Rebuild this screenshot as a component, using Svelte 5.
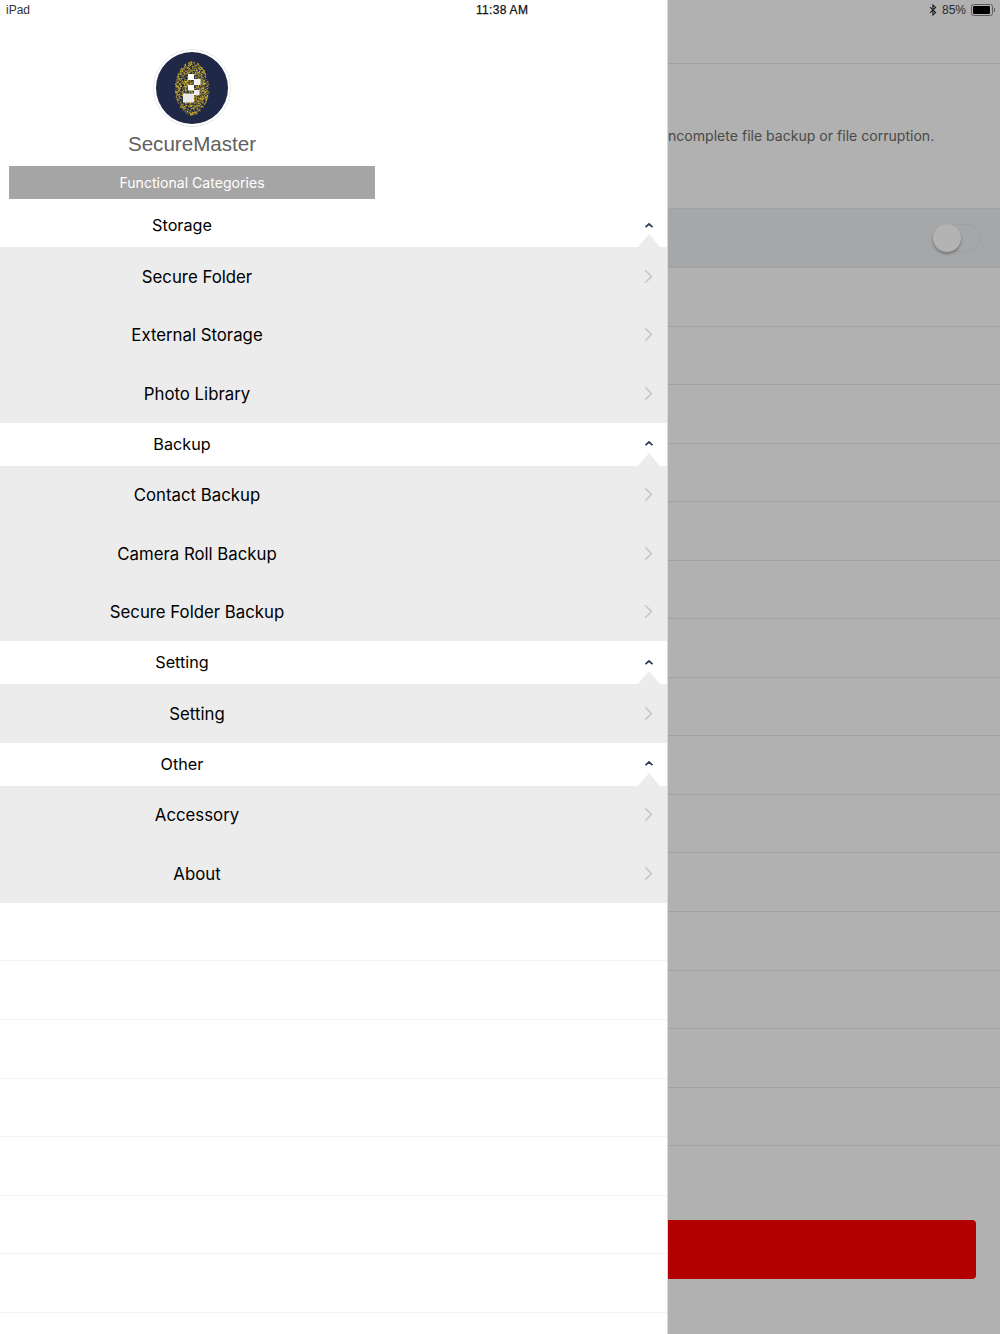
<script>
  const groups = [
    { title: 'Storage', items: ['Secure Folder', 'External Storage', 'Photo Library'] },
    { title: 'Backup', items: ['Contact Backup', 'Camera Roll Backup', 'Secure Folder Backup'] },
    { title: 'Setting', items: ['Setting'] },
    { title: 'Other', items: ['Accessory', 'About'] }
  ];

  const emptyRows = Array(7);
  const bgRows = Array(15);

  // speckle for the fingerprint in the logo
  let seed = 7;
  const rnd = () => {
    seed = (seed * 16807) % 2147483647;
    return seed / 2147483647;
  };
  const dots = [];
  while (dots.length < 1500) {
    const x = rnd() * 2 - 1;
    const y = rnd() * 2 - 1;
    if (x * x + y * y > 1) continue;
    dots.push({
      x: 39 + x * 17,
      y: 39.5 + y * 27 * (1 - 0.1 * x * x),
      r: 0.3 + rnd() * 0.35,
      o: 0.5 + rnd() * 0.5
    });
  }
</script>

<div class="page">
  <aside class="drawer">
    <header class="brand">
      <svg class="logo" width="78" height="78" viewBox="0 0 78 78">
        <circle cx="39" cy="39" r="38.5" fill="#fff" stroke="#e8e9ec" />
        <circle cx="39" cy="39" r="36" fill="#1f2947" />
        {#each dots as d}
          <circle cx={d.x} cy={d.y} r={d.r} fill="#e6c12c" opacity={d.o} />
        {/each}
        <rect x="35" y="25" width="6" height="6" fill="#fff" />
        <rect x="41" y="30" width="6.5" height="6" fill="#f4f4f4" />
        <rect x="35" y="36" width="6" height="5.5" fill="#fff" />
        <rect x="41" y="41" width="5.5" height="5" fill="#eee" />
        <rect x="30" y="44.5" width="11" height="9" fill="#e9e9e9" />
      </svg>
      <div class="app-name">SecureMaster</div>
    </header>
    <div class="banner">Functional Categories</div>

    {#each groups as g}
      <section>
        <div class="group-head">
          <span>{g.title}</span>
          <svg class="up" width="10" height="7" viewBox="0 0 10 7">
            <path d="M1.5 5.2 L5 2 L8.5 5.2" fill="none" stroke="#2f3d52" stroke-width="1.7" />
          </svg>
          <i class="notch"></i>
        </div>
        {#each g.items as item}
          <div class="item">
            <span>{item}</span>
            <svg class="next" width="9" height="15" viewBox="0 0 9 15">
              <path d="M1.3 1.2 L7.4 7.5 L1.3 13.8" fill="none" stroke="#c6c6cb" stroke-width="1.6" />
            </svg>
          </div>
        {/each}
      </section>
    {/each}

    {#each emptyRows as _}
      <div class="empty"></div>
    {/each}
  </aside>

  <main class="behind">
    <div class="nav"></div>
    <div class="note"><p>ncomplete file backup or file corruption.</p></div>
    <div class="switch-row">
      <div class="switch"><i></i></div>
    </div>
    {#each bgRows as _}
      <div class="bg-row"></div>
    {/each}
    <div class="red-btn"></div>
  </main>

  <div class="status">
    <span>iPad</span>
    <span class="time">11:38 AM</span>
    <span class="right">
      <svg width="8" height="12" viewBox="0 0 8 12">
        <path d="M1 3.2 L6.6 8.5 L3.9 11 V1 L6.6 3.5 L1 8.8" fill="none" stroke="#222" stroke-width="1.1" />
      </svg>
      85%
      <span class="battery"><b></b></span>
    </span>
  </div>
</div>

<style>
  :global(body) { margin: 0; }
  .page {
    position: relative; display: flex; width: 1000px; height: 1334px; overflow: hidden;
    font-family: "Inter", "Liberation Sans", sans-serif; color: #000;
  }

  .drawer { width: 668px; flex: none; background: #fff; box-sizing: border-box; border-right: 1px solid #d8d8d8; }
  .brand { height: 166px; width: 384px; display: flex; flex-direction: column; align-items: center; padding-top: 49px; box-sizing: border-box; }
  .logo { display: block; }
  .app-name { font: 20.6px/26px "Liberation Sans", sans-serif; color: #5f5f5f; margin-top: 4px; }
  .banner {
    width: 366px; height: 33px; margin-left: 9px; background: #a5a5a5; color: #fff;
    font-size: 14.1px; line-height: 34px; text-align: center;
  }

  .group-head { position: relative; height: 43px; display: flex; align-items: center; background: #fff; font-size: 16.2px; }
  section:first-of-type .group-head { height: 48.4px; padding-top: 5px; box-sizing: border-box; }
  .group-head span { width: 364px; text-align: center; margin-bottom: 1px; }
  .up { position: absolute; left: 644px; top: calc(50% - 4px); }
  section:first-of-type .up { top: calc(50% - 1px); }
  .notch {
    position: absolute; left: 638px; bottom: 0; width: 0; height: 0;
    border-left: 11px solid transparent; border-right: 11px solid transparent; border-bottom: 13px solid #ececec;
  }

  .item { position: relative; height: 58.5px; display: flex; align-items: center; background: #ececec; font-size: 16.8px; }
  .item span { width: 394px; text-align: center; }
  .next { position: absolute; left: 644px; top: 21.5px; }

  .empty { height: 58.6px; box-sizing: border-box; border-bottom: 1px solid #f3f3f3; }

  .behind { position: relative; flex: 1; background: #b1b1b1; overflow: hidden; font-size: 14.07px; color: #4a4a4a; }
  .nav { height: 64px; box-sizing: border-box; border-bottom: 1px solid #a0a0a0; }
  .note { height: 145px; box-sizing: border-box; border-bottom: 1px solid #a2a2a2; }
  .note p { margin: 0; padding-top: 63px; line-height: 18px; white-space: nowrap; }
  .switch-row { height: 59px; background: #a6a7a9; box-sizing: border-box; border-bottom: 1px solid #a0a0a0; display: flex; align-items: center; justify-content: flex-end; padding-right: 19px; }
  .switch { position: relative; width: 48px; height: 28px; border: 1px solid #a0a1a3; border-radius: 15px; box-sizing: border-box; }
  .switch i { position: absolute; left: -1px; top: -1px; width: 28px; height: 28px; border-radius: 50%; background: #b3b3b3; box-shadow: 0 2px 3px rgba(0, 0, 0, 0.3); }
  .bg-row { height: 58.55px; box-sizing: border-box; border-bottom: 1px solid #a2a2a2; }
  .red-btn {
    position: absolute; left: -10px; right: 24px; top: 1220px; height: 59px;
    background: #b20000; border-radius: 4px;
  }

  .status {
    position: absolute; left: 0; right: 0; top: 0; height: 20px; padding: 0 6px; box-sizing: border-box;
    display: flex; justify-content: space-between; align-items: center;
    font: 12px/20px "Liberation Sans", sans-serif; color: #333;
  }
  .time { position: absolute; left: 476px; color: #111; font-size: 12px; letter-spacing: 0.3px; -webkit-text-stroke: 0.25px #111; }
  .right { display: flex; align-items: center; gap: 5px; color: #2b2b2b; }
  .battery {
    position: relative; width: 20px; height: 10px; border: 1px solid #5c5c5c; border-radius: 2.5px;
    box-sizing: content-box; margin-right: 1px;
  }
  .battery b { display: block; width: 17px; height: 8px; margin: 1px; background: #000; border-radius: 1px; }
  .battery::after { content: ''; position: absolute; right: -3px; top: 3px; width: 1.5px; height: 4px; background: #5c5c5c; }
</style>
